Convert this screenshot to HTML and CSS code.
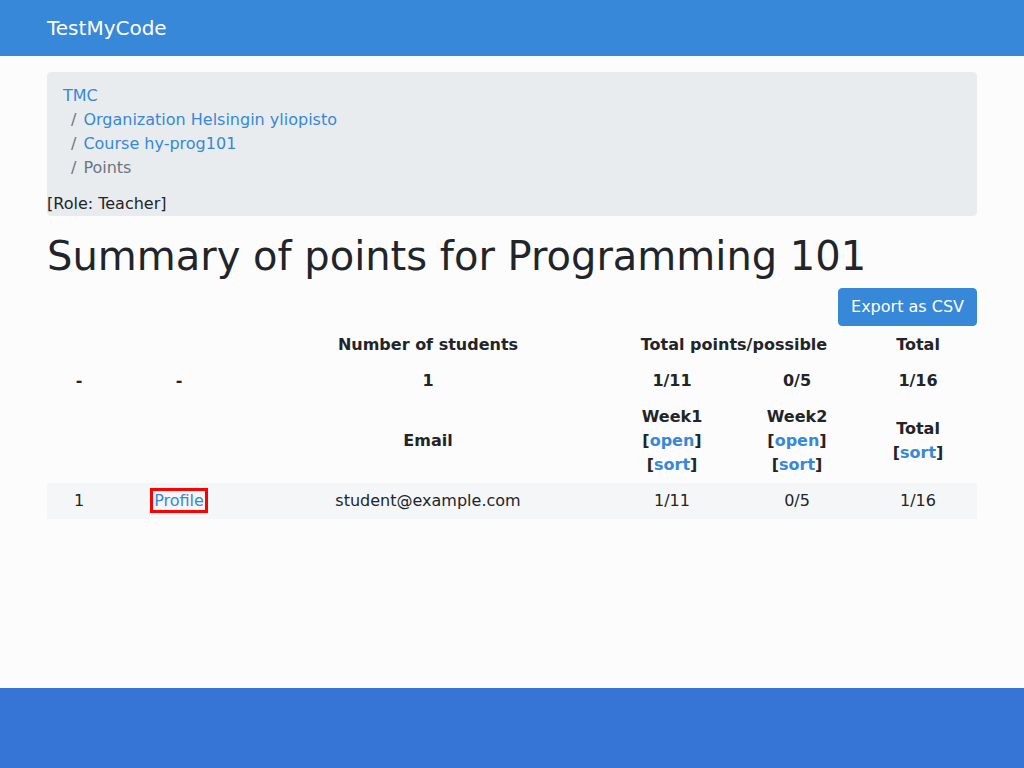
FILE: index.html
```html
<!DOCTYPE html>
<html lang="en">
<head>
<meta charset="utf-8">
<title>Points</title>
<link rel="stylesheet" href="styles.css">
</head>
<body>
<div class="page">
  <header class="navbar">
    <div class="container"><a class="brand" href="#">TestMyCode</a></div>
  </header>
  <main class="container main">
    <nav class="crumbs">
      <ol class="breadcrumb">
        <li class="crumb first"><a href="#">TMC</a></li>
        <li class="crumb"><a href="#">Organization Helsingin yliopisto</a></li>
        <li class="crumb"><a href="#">Course hy-prog101</a></li>
        <li class="crumb active">Points</li>
      </ol>
      <div class="role">[Role: Teacher]</div>
    </nav>
    <h1 class="title">Summary of points for Programming 101</h1>
    <div class="actions"><a class="btn" href="#">Export as CSV</a></div>
    <table class="points">
      <colgroup>
        <col class="c1"><col class="c2"><col class="c3"><col class="c4"><col class="c5"><col class="c6">
      </colgroup>
      <thead>
        <tr>
          <th></th><th></th><th>Number of students</th><th colspan="2">Total points/possible</th><th>Total</th>
        </tr>
        <tr>
          <th>-</th><th>-</th><th>1</th><th>1/11</th><th>0/5</th><th>1/16</th>
        </tr>
        <tr>
          <th></th><th></th><th>Email</th>
          <th>Week1<br>[<a href="#">open</a>]<br>[<a href="#">sort</a>]</th>
          <th>Week2<br>[<a href="#">open</a>]<br>[<a href="#">sort</a>]</th>
          <th>Total<br>[<a href="#">sort</a>]</th>
        </tr>
      </thead>
      <tbody>
        <tr class="striped">
          <td>1</td><td><a class="profile" href="#">Profile</a></td><td>student@example.com</td><td>1/11</td><td>0/5</td><td>1/16</td>
        </tr>
      </tbody>
    </table>
  </main>
  <footer class="footer"></footer>
</div>
</body>
</html>
```
FILE: styles.css
```css
* { box-sizing: border-box; }
html, body { margin: 0; padding: 0; }
body {
  font-family: "DejaVu Sans", sans-serif;
  font-size: 16px;
  line-height: 24px;
  color: #212529;
  background: #fcfcfc;
}
a { color: #3788d8; text-decoration: none; }
.page { min-height: 768px; display: flex; flex-direction: column; }
.container { width: 960px; margin: 0 auto; padding: 0 15px; }
.navbar { background: #3788d8; height: 56px; display: flex; align-items: center; }
.brand { color: #fff; font-size: 20px; line-height: 30px; }
.main { flex: 1; padding-top: 16px; }
.crumbs { background: #e9ecef; border-radius: 4px; margin-bottom: 16px; }
.breadcrumb { list-style: none; margin: 0; padding: 12px 16px; display: flex; flex-direction: column; }
.crumb + .crumb { padding-left: 8px; }
.crumb + .crumb::before { content: "/"; color: #6c757d; padding-right: 7px; }
.crumb.active { color: #6c757d; }
.role { line-height: 24px; }
.title { font-size: 40px; line-height: 48px; font-weight: 500; margin: 0 0 8px; }
.actions { display: flex; justify-content: flex-end; }
.btn {
  background: #3788d8; color: #fff; padding: 6px 12px; line-height: 24px;
  border: 1px solid #3788d8; border-radius: 4px;
}
.points { width: 930px; border-collapse: collapse; table-layout: fixed; text-align: center; border-top: 1px solid #fcfcfc; }
.c1 { width: 64px; } .c2 { width: 136px; } .c3 { width: 362px; }
.c4 { width: 126px; } .c5 { width: 124px; } .c6 { width: 118px; }
.points th, .points td { padding: 6px; vertical-align: middle; }
.points th { font-weight: bold; }
.striped { background: #f5f6f8; }
.profile { outline: 3px solid #ff0000; outline-offset: 0; padding: 0 1px; }
.footer { background: #3674d6; height: 80px; }
```
